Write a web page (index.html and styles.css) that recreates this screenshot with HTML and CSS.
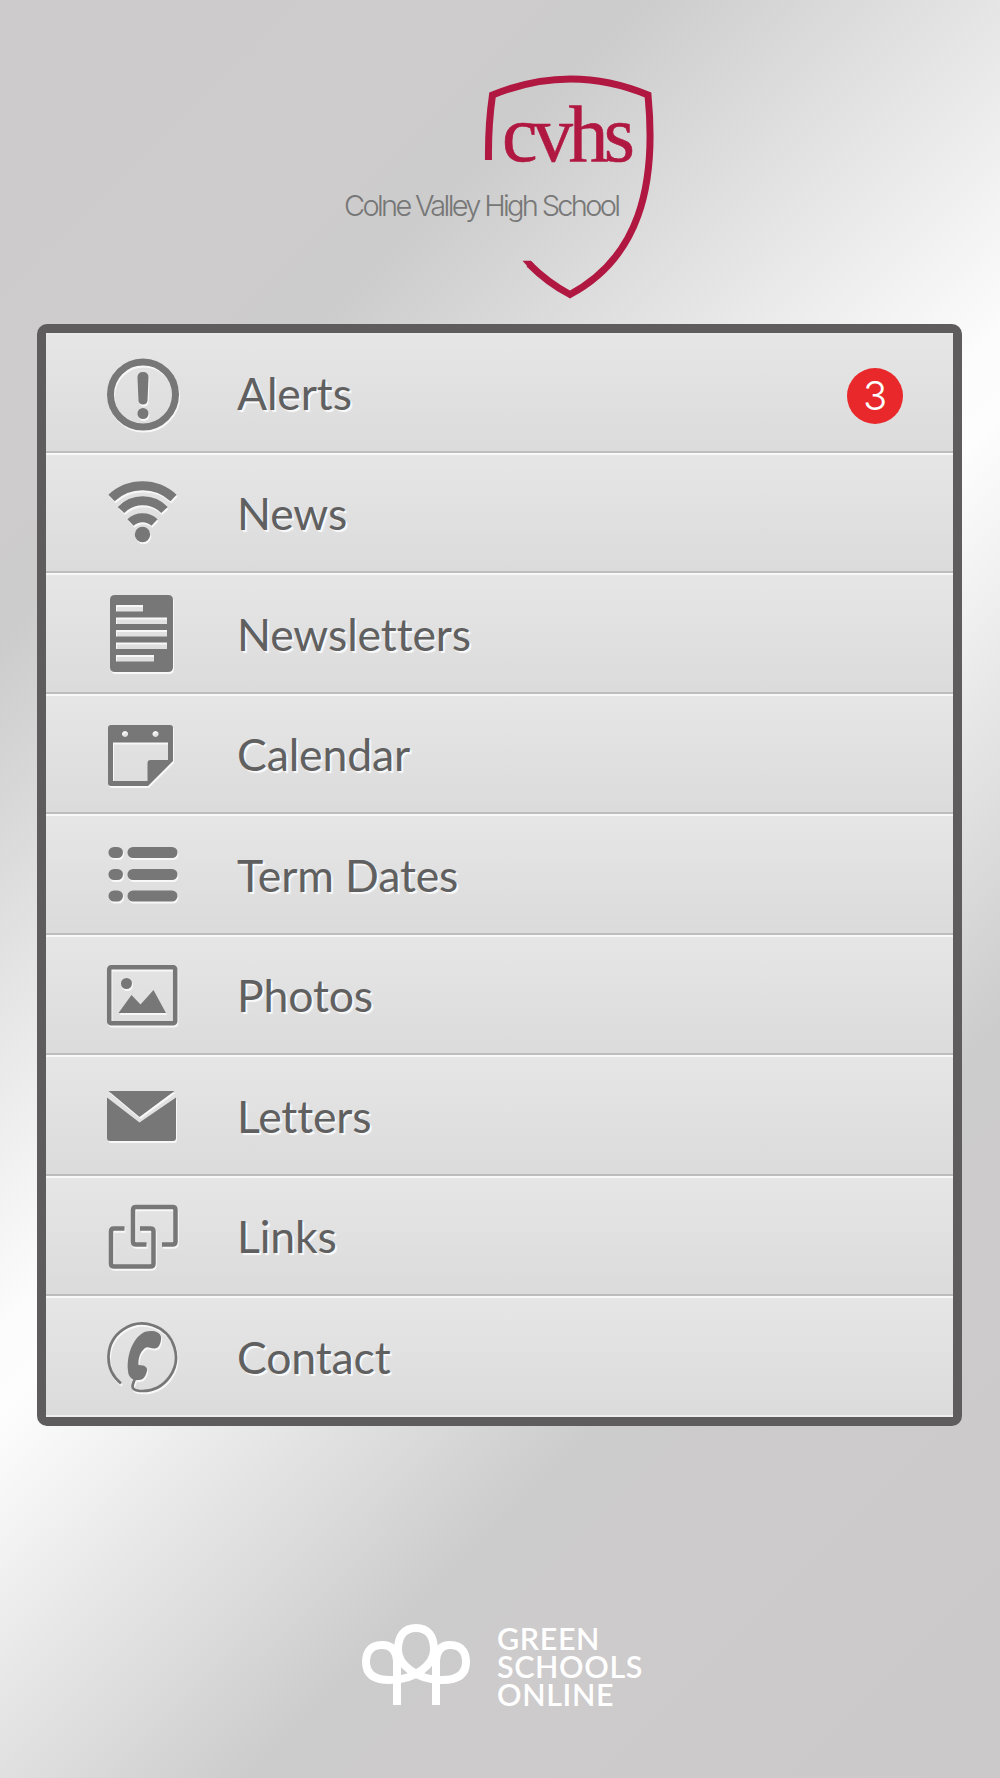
FILE: index.html
```
<!DOCTYPE html>
<html>
<head>
    <meta charset="UTF-8">
    <title>Colne Valley High School</title>
    <meta name="viewport" content="width=device-width, initial-scale=1">
    <link rel="stylesheet" href="styles.css">
</head>
<body>
<div class="page">
  <div class="header">
    <svg class="crest" width="310" height="226" viewBox="0 0 310 226">
      <path class="shield" d="M143.500 84 Q143 50 147.500 19 Q226 -13 303 19 C312 112 293 182 225 218.500 Q203 207 184 188"/>
      <path class="tip" d="M177.500 184.700 H186 L189 188 L183 191 Z"/>
      <text class="initials" x="157" y="84.500" textLength="133" lengthAdjust="spacing">cvhs</text>
      <text class="school" x="-1" y="140" textLength="277" lengthAdjust="spacing">Colne Valley High School</text>
    </svg>
  </div>

  <div class="menu">
    <a class="item">
      <svg class="icon" width="74" height="84" viewBox="0 0 74 84">
        <circle class="line" cx="37" cy="43.500" r="32.500" stroke-width="7"/>
        <path d="M31.500 26.500 Q31.500 21 37 21 Q42.500 21 42.500 26.500 L41.500 49.500 Q41 53.500 37 53.500 Q33 53.500 32.500 49.500 Z"/>
        <circle cx="37" cy="62.500" r="5.500"/>
      </svg>
      <span class="label">Alerts</span>
      <span class="badge">3</span>
    </a>
    <a class="item">
      <svg class="icon" width="74" height="84" viewBox="0 0 74 84">
        <g class="line" stroke-width="9">
          <path d="M5.500 27 A45.500 45.500 0 0 1 67.500 27"/>
          <path d="M15 39 A30 30 0 0 1 58.500 39"/>
          <path d="M24.500 51.500 A17.500 17.500 0 0 1 48.500 51.500"/>
        </g>
        <circle cx="36.500" cy="63.500" r="7.700"/>
      </svg>
      <span class="label">News</span>
    </a>
    <a class="item">
      <svg class="icon" width="74" height="84" viewBox="0 0 74 84">
        <path fill-rule="evenodd" d="M9 4 H62 Q67 4 67 9 V76 Q67 81 62 81 H9 Q4 81 4 76 V9 Q4 4 9 4 Z M10 14 V20.500 H37 V14 Z M10 26.500 V33 H61 V26.500 Z M10 39 V45.500 H61 V39 Z M10 51.500 V58 H61 V51.500 Z M10 64 V70.500 H48 V64 Z"/>
      </svg>
      <span class="label">Newsletters</span>
    </a>
    <a class="item">
      <svg class="icon" width="74" height="84" viewBox="0 0 74 84">
        <path fill-rule="evenodd" d="M5 13 H64 Q67 13 67 16 V49 L42 74 H5 Q2 74 2 71 V16 Q2 13 5 13 Z M7 30.500 V69 H41.500 V51 Q41.500 48 44.500 48 H62 V30.500 Z M19 19 a3 3 0 1 0 .1 0 Z M49.500 19 a3 3 0 1 0 .1 0 Z"/>
      </svg>
      <span class="label">Calendar</span>
    </a>
    <a class="item">
      <svg class="icon" width="74" height="84" viewBox="0 0 74 84">
        <rect x="2.500" y="15" width="14.500" height="11" rx="5.500"/>
        <rect x="21.500" y="15" width="50" height="11" rx="5.500"/>
        <rect x="2.500" y="37" width="14.500" height="11" rx="5.500"/>
        <rect x="21.500" y="37" width="50" height="11" rx="5.500"/>
        <rect x="2.500" y="58.500" width="14.500" height="11" rx="5.500"/>
        <rect x="21.500" y="58.500" width="50" height="11" rx="5.500"/>
      </svg>
      <span class="label">Term Dates</span>
    </a>
    <a class="item">
      <svg class="icon" width="74" height="84" viewBox="0 0 74 84">
        <rect class="line" x="3.200" y="14.200" width="66" height="56" rx="2" stroke-width="4.500"/>
        <circle cx="20.500" cy="30.500" r="5.500"/>
        <path d="M12.500 60 L25.500 42 L34.500 51.500 L47.500 37 L60 60 Z"/>
      </svg>
      <span class="label">Photos</span>
    </a>
    <a class="item">
      <svg class="icon" width="74" height="84" viewBox="0 0 74 84">
        <path d="M2.500 18 H68.500 L33.500 44 Z"/>
        <path d="M1 24.500 L33.500 49.500 L70 24.500 V65 Q70 68 67 68 H4 Q1 68 1 65 Z"/>
      </svg>
      <span class="label">Letters</span>
    </a>
    <a class="item">
      <svg class="icon" width="74" height="84" viewBox="0 0 74 84">
        <g class="line" stroke-width="4.500">
          <path d="M40.500 50.500 H30 Q27 50.500 27 47.500 V16 Q27 13 30 13 H66.500 Q69.500 13 69.500 16 V47.500 Q69.500 50.500 66.500 50.500 H56"/>
          <path d="M18.500 34.500 H8 Q5 34.500 5 37.500 V69.500 Q5 72.500 8 72.500 H44.500 Q47.500 72.500 47.500 69.500 V37.500 Q47.500 34.500 44.500 34.500 H34"/>
        </g>
      </svg>
      <span class="label">Links</span>
    </a>
    <a class="item">
      <svg class="icon" width="74" height="84" viewBox="0 0 74 84">
        <path class="line" stroke-width="2.700" d="M15 68.500 A33.700 33.700 0 1 1 36.500 76 Q24.500 76 27 69 L29.500 62"/>
        <path d="M22 56 C20 38 29 20 40 16.500 C46 15 54 16 55 22 C55.500 29 52 34 48 33.500 C43 33 42 31 39 33 C34 37 32 44 32.500 50 C40 50 41.500 53 41 56 C39.500 62 37 65 33 65 C26 66 22.500 62 22 56 Z"/>
      </svg>
      <span class="label">Contact</span>
    </a>
  </div>

  <div class="footer">
    <svg class="trees" width="110" height="84" viewBox="0 0 110 84">
      <path d="M35 82 V38 Q34 22 20 22 C7 22 4 31 4 39 C4 51 12 57 28 57 C55 57 72 40 72 27 C72 13 66 5 54 5 C42 5 36 13 36 27 C36 40 53 57 80 57 C96 57 104 51 104 39 C104 31 101 22 88 22 Q75 22 74 38 V82"/>
    </svg>
    <div class="brand">GREEN<br>SCHOOLS<br>ONLINE</div>
  </div>
</div>
</body>
</html>
```

FILE: styles.css
```
body {
  margin: 0;
  font-family: Lato, "Open Sans", sans-serif;
}

.page {
  box-sizing: border-box;
  height: 1778px;
  padding: 0 38px 0 37px;
  background: linear-gradient(135deg, #cdcbcc 0%, #cecccd 19%, #cccccc 23%, #fcfcfc 48%, #fdfdfd 51%, #cccccc 73%, #cdcbcc 78%, #cbc9ca 100%);
}

.header {
  height: 248px;
  padding: 76px 0 0 308px;
}

.crest {
  display: block;
  overflow: visible;
}

.shield {
  fill: none;
  stroke: #b01842;
  stroke-width: 7px;
}

.tip {
  fill: #b01842;
}

.initials {
  font-family: "Liberation Serif", serif;
  font-size: 80px;
  fill: #b01842;
  stroke: #b01842;
  stroke-width: 0.600px;
}

.school {
  font-family: Inter, "Liberation Sans", sans-serif;
  font-size: 29px;
  font-weight: 300;
  fill: #777;
}

.menu {
  box-sizing: border-box;
  height: 1102px;
  border: 9px solid #5f5c5d;
  border-radius: 10px;
  background: #dcdcdc;
}

.item {
  display: flex;
  align-items: center;
  box-sizing: border-box;
  height: 120.500px;
  padding: 0 50px 0 60px;
  border-top: 2px solid #f8f8f8;
  border-bottom: 2px solid #bdbdbd;
  background: linear-gradient(#e6e6e6, #dbdbdb);
  color: #606060;
}

.item:first-child {
  height: 119.500px;
  border-top-color: #e9e9e9;
}

.item:last-child {
  height: 121px;
  border-bottom-color: #eee;
}

.icon {
  fill: #777;
  filter: drop-shadow(1.500px 2px 0 #f8f8f8);
}

.line {
  fill: none;
  stroke: #777;
}

.label {
  flex: 1;
  margin-left: 57px;
  font-size: 44.500px;
  letter-spacing: -0.100px;
  font-variant-ligatures: none;
  text-shadow: 2px 2px 1px #fafafa;
}

.badge {
  width: 56px;
  height: 56px;
  margin-top: 6px;
  line-height: 56px;
  border-radius: 50%;
  background: #e8282a;
  color: #fff;
  font-family: Inter, "Liberation Sans", sans-serif;
  font-size: 40px;
  font-weight: 300;
  text-align: center;
}

.footer {
  display: flex;
  padding: 197px 0 0 325px;
}

.trees {
  fill: none;
  stroke: #fff;
  stroke-width: 8px;
}

.brand {
  margin: 1px 0 0 25px;
  color: #fff;
  font-size: 30.500px;
  font-weight: 600;
  letter-spacing: 0.600px;
  line-height: 28px;
}
```
